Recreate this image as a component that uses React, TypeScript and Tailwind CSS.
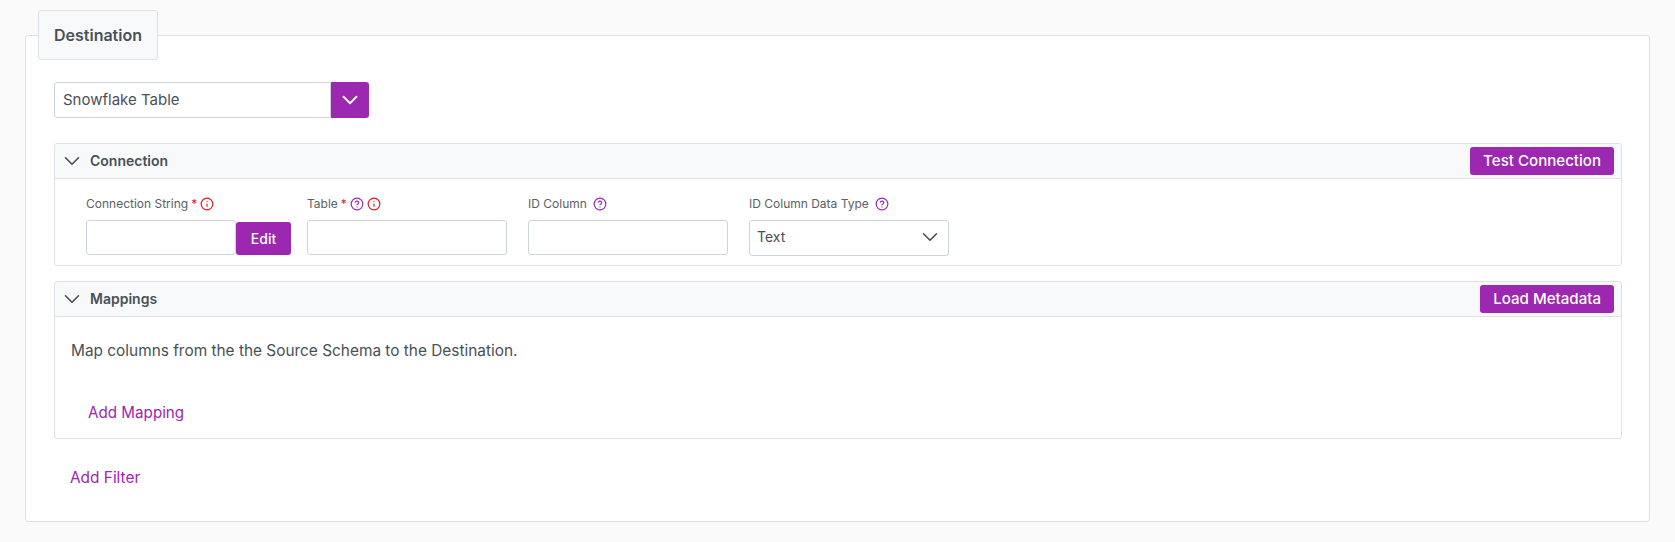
import { ChevronDown, CircleHelp, Info } from "lucide-react";

const inputClass = "h-[35px] w-[200px] rounded-[3px] border border-[#ced4da] bg-white";

function Help() {
    return <CircleHelp className="h-[14px] w-[14px] text-[#9c27b0]" strokeWidth={2} />;
}

function Alert() {
    return <Info className="h-[14px] w-[14px] text-[#e5131d]" strokeWidth={2} />;
}

function Required() {
    return <span className="text-[12px] text-[#e5131d]">*</span>;
}

function FieldLabel({ children }: { children: React.ReactNode }) {
    return (
        <div className="mb-[7px] flex h-[18px] items-center gap-[3px] text-[12px] text-[#5c6066]">
            {children}
        </div>
    );
}

function PanelHeader({ title, action }: { title: string; action: string }) {
    return (
        <div className="flex h-[35px] items-center rounded-t-[3px] border-b border-[#dee2e6] bg-[#f8f9fa] pl-[4px] pr-[7px]">
            <ChevronDown className="h-[26px] w-[26px] text-[#495057]" strokeWidth={1.5} />
            <span className="ml-[5px] pb-[1px] text-[14px] font-semibold text-[#495057]">{title}</span>
            <button className="ml-auto h-[28px] rounded-[3px] bg-[#9c27b0] px-[13px] text-[15.1px] font-medium text-white">
                {action}
            </button>
        </div>
    );
}

export default function App() {
    return (
        <div
            className="h-[542px] bg-[#fafafa] px-[25px] pt-[10px] text-[#495057]"
            style={{ fontFamily: "Inter, sans-serif" }}
        >
            {/* Tab */}
            <div className="relative z-10 -mb-[25px] ml-[13px] flex h-[50px] w-[120px] items-center justify-center rounded-[3px] border border-[#dee2e6] bg-[#f8f9fa] text-[16px] font-semibold">
                Destination
            </div>

            {/* Card */}
            <div className="h-[487px] rounded-[3px] border border-[#dee2e6] bg-white pl-[28px] pr-[27px] pt-[46px]">
                {/* Source type select */}
                <div className="flex h-[36px] w-[315px]">
                    <div className="flex flex-1 items-center rounded-l-[3px] border border-[#ced4da] pl-[8px] text-[15px]">
                        Snowflake Table
                    </div>
                    <div className="flex w-[38px] items-center justify-center rounded-r-[3px] bg-[#9c27b0]">
                        <ChevronDown className="h-[26px] w-[26px] text-white" strokeWidth={1.75} />
                    </div>
                </div>

                {/* Connection */}
                <div className="mt-[25px] h-[123px] rounded-[3px] border border-[#dee2e6]">
                    <PanelHeader title="Connection" action="Test Connection" />
                    <div className="flex gap-[21px] pl-[31px] pt-[16px]">
                        <div className="w-[200px]">
                            <FieldLabel>
                                Connection String <Required /> <Alert />
                            </FieldLabel>
                            <div className="flex items-end">
                                <div className="h-[35px] w-[150px] shrink-0 rounded-[3px] border border-[#ced4da]" />
                                <button className="h-[33px] w-[55px] shrink-0 rounded-[3px] bg-[#9c27b0] text-[14px] font-medium text-white">
                                    Edit
                                </button>
                            </div>
                        </div>
                        <div>
                            <FieldLabel>
                                Table <Required /> <Help /> <Alert />
                            </FieldLabel>
                            <div className={inputClass} />
                        </div>
                        <div>
                            <FieldLabel>
                                ID Column <span className="ml-[3px]"><Help /></span>
                            </FieldLabel>
                            <div className={inputClass} />
                        </div>
                        <div>
                            <FieldLabel>
                                ID Column Data Type <span className="ml-[3px]"><Help /></span>
                            </FieldLabel>
                            <div className="flex h-[36px] w-[200px] items-center justify-between rounded-[3px] border border-[#ced4da] pb-[3px] pl-[7px] pr-[5px] text-[14px]">
                                Text
                                <ChevronDown className="h-[26px] w-[26px] text-[#495057]" strokeWidth={1.5} />
                            </div>
                        </div>
                    </div>
                </div>

                {/* Mappings */}
                <div className="mt-[15px] h-[158px] rounded-[3px] border border-[#dee2e6]">
                    <PanelHeader title="Mappings" action="Load Metadata" />
                    <p className="pl-[16px] pt-[24px] text-[15.4px] leading-[20px]">
                        Map columns from the the Source Schema to the Destination.
                    </p>
                    <a className="mt-[42px] block pl-[33px] text-[15.2px] leading-[20px] text-[#9c27b0]">Add Mapping</a>
                </div>

                <a className="mt-[29px] block pl-[16px] text-[15.4px] leading-[20px] text-[#9c27b0]">Add Filter</a>
            </div>
        </div>
    );
}
